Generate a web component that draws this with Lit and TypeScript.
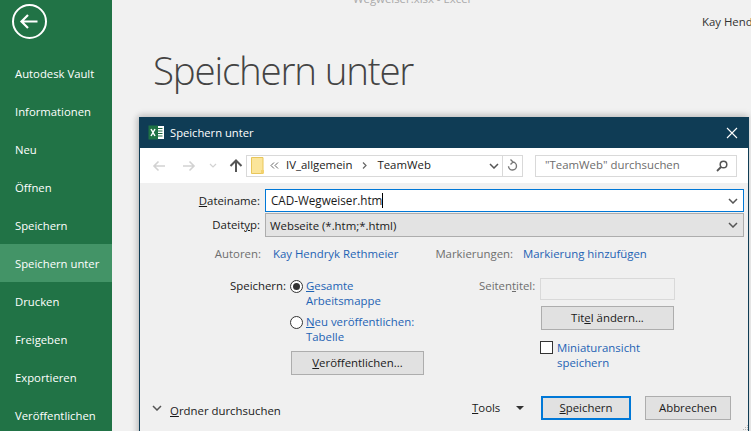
import { LitElement, html, css } from "lit";
import { customElement } from "lit/decorators.js";

const NAV = ["Autodesk Vault","Informationen","Neu","Öffnen","Speichern","Speichern unter","Drucken","Freigeben","Exportieren","Veröffentlichen"];

@customElement("app-root")
export class AppRoot extends LitElement {
  static styles = css`
    :host { display:block; width:751px; height:431px; overflow:hidden; position:relative; background:#f1f1f1;
      font-family:"Open Sans","Noto Sans",sans-serif; font-size:11.4px; color:#1a1a1a; }
    * { box-sizing:border-box; }
    u { text-underline-offset:1px; text-decoration-thickness:1px; }
    .app { display:flex; height:431px; }
    .side { width:112px; flex:none; background:#217346; color:#fff; display:flex; flex-direction:column; }
    .back { height:54px; flex:none; padding:4px 0 0 12px; }
    .nav { height:38px; flex:none; padding-left:15px; display:flex; align-items:center; font-size:11.3px; }
    .nav.on { background:#439467; }
    .main { flex:1; position:relative; padding:42px 0 0 41px; }
    .h1 { font-size:38.5px; font-weight:300; color:#444; line-height:56px; letter-spacing:-1.2px; }
    .wintitle { position:absolute; left:241px; top:-9px; line-height:16px; color:#aaa; }
    .user { position:absolute; right:-30px; top:14px; width:79px; white-space:nowrap; line-height:16px; color:#333; }
    .dlg { position:absolute; left:139px; top:117px; width:610px; height:330px; background:#f0f0f0;
      border:1px solid #0f3c55; border-top:none; box-shadow:-3px 0 6px rgba(0,0,0,.13), 0 -3px 6px rgba(0,0,0,.13); display:flex; flex-direction:column; }
    .tbar { height:31px; flex:none; background:#0f3c55; color:#fff; display:flex; align-items:center; padding:0 10px 0 8px; gap:5px; font-size:11.2px; }
    .tbar span { flex:1; }
    .tool { height:35px; flex:none; background:#fff; display:flex; align-items:center; padding:0 11px 0 12px; }
    .navs { width:94px; flex:none; display:flex; align-items:center; }
    .addr { width:277px; height:22px; border:1px solid #d9d9d9; display:flex; align-items:center; padding-left:4px; flex:none; color:#222; }
    .addr .crumbs { flex:1; display:flex; align-items:center; gap:7px; padding-left:6px; }
    .addr span, .search span, .input span, .btn span, .btn.cancel { padding-bottom:2px; }
    .addr .refresh { width:20px; height:20px; border-left:1px solid #d9d9d9; display:flex; align-items:center; justify-content:center; }
    .addr .dd { width:16px; display:flex; justify-content:center; }
    .search { width:202px; height:22px; margin-left:12px; border:1px solid #d9d9d9; display:flex; align-items:center; justify-content:space-between; padding:0 8px 0 9px; color:#6d6d6d; flex:none; }
    .form { flex:1; position:relative; padding-top:6px; }
    .row { display:flex; align-items:center; }
    .lbl { width:125px; text-align:right; padding-right:5px; flex:none; }
    .input { width:479px; height:23px; border:1px solid #0078d7; background:#fff; display:flex; align-items:center; padding:0 5px; justify-content:space-between; font-size:11.7px; }
    .caret { display:inline-block; width:1px; height:15px; background:#000; vertical-align:-3px; }
    .select { width:479px; height:24px; margin-top:1px; border:1px solid #adadad; background:#e3e3e3; display:flex; align-items:center; padding:0 5px 0 4px; justify-content:space-between; }
    .meta { margin-top:5px; height:22px; }
    .meta .lab { color:#6e6e6e; width:121px; text-align:right; flex:none; margin-right:12px; }
    .link { color:#1e63b4; }
    .meta .m2 { color:#6e6e6e; margin-left:37px; margin-right:10px; }
    .opts { display:flex; margin-top:14px; }
    .left { width:400px; flex:none; padding-left:89px; display:flex; }
    .left .cap { width:61px; text-align:right; padding-right:4px; flex:none; line-height:15px; }
    .radios { display:flex; flex-direction:column; width:140px; }
    .radio { display:flex; gap:3px; color:#1e63b4; line-height:15px; }
    .radio + .radio { margin-top:6px; }
    .rd { width:13px; height:13px; flex:none; margin-top:2px; }
    .btn { height:24px; border:1px solid #adadad; background:#e1e1e1; display:flex; align-items:center; justify-content:center; color:#1a1a1a; flex:none; }
    .pub { width:133px; margin:7px 0 0 1px; }
    .right { display:flex; flex-direction:column; }
    .stitle { display:flex; align-items:flex-start; margin-left:-61px; }
    .stitle label { width:61px; padding-right:6px; text-align:right; color:#6e6e6e; line-height:15px; white-space:nowrap; flex:none; display:block; }
    .stitle .box { width:135px; height:22px; border:1px solid #d9d9d9; background:#f0f0f0; }
    .ttl { width:133px; margin:6px 0 0 1px; }
    .chk { display:flex; gap:4px; margin-top:10px; color:#1e63b4; line-height:15px; }
    .cb { width:13px; height:13px; border:1px solid #333; background:#fff; flex:none; margin-top:1px; }
    .foot { position:absolute; left:0; right:0; top:213px; height:24px; display:flex; align-items:center; }
    .more { margin-left:12px; display:flex; align-items:center; gap:8px; width:320px; flex:none; }
    .more span { padding-top:4px; }
    .tools { width:69px; flex:none; display:flex; align-items:center; gap:16px; }
    .tools span { padding-bottom:2px; }
    .save { width:90px; border:2px solid #0078d7; background:#e1e1e1; }
    .cancel { width:86px; margin-left:14px; }
    .grip { position:absolute; left:603px; top:242px; }
  `;

  private chev() {
    return html`<svg width="10" height="6" viewBox="0 0 10 6"><path d="M1 1l4 4 4-4" fill="none" stroke="#555" stroke-width="1.500"/></svg>`;
  }

  render() {
    return html`
      <div class="app">
        <div class="side">
          <div class="back">
            <svg width="36" height="36" viewBox="0 0 36 36"><circle cx="17.500" cy="17.500" r="16.500" fill="none" stroke="#fff" stroke-width="2"/>
              <path d="M9.500 17.500h16M16 11l-6.500 6.500L16 24" fill="none" stroke="#fff" stroke-width="2.200"/></svg>
          </div>
          ${NAV.map((n) => html`<div class="nav ${n === "Speichern unter" ? "on" : ""}">${n}</div>`)}
        </div>
        <div class="main">
          <div class="wintitle">Wegweiser.xlsx - Excel</div>
          <div class="user">Kay Hendryk Rethmeier</div>
          <div class="h1">Speichern unter</div>
        </div>
      </div>
      <div class="dlg">
        <div class="tbar">
          <svg width="17" height="15" viewBox="0 0 17 15"><rect x="8" y="1" width="8" height="13" fill="#fff"/><path d="M10 3.500h4.500M10 6h4.500M10 8.500h4.500M10 11h4.500" stroke="#1f6b43" stroke-width="1.200"/>
            <rect x="0.500" y="0.500" width="9.500" height="14" fill="#1f7244"/><path d="M3 4l4 7M7 4l-4 7" stroke="#fff" stroke-width="1.500"/></svg>
          <span>Speichern unter</span>
          <svg width="12" height="12" viewBox="0 0 12 12"><path d="M1 1l10 10M11 1L1 11" stroke="#fff" stroke-width="1.100"/></svg>
        </div>
        <div class="tool">
          <div class="navs">
            <svg width="14" height="12" viewBox="0 0 14 12"><path d="M13 6H2M6.500 1.500L2 6l4.500 4.500" fill="none" stroke="#d2d2d2" stroke-width="1.600"/></svg>
            <svg style="margin-left:16px" width="14" height="12" viewBox="0 0 14 12"><path d="M1 6h11M7.500 1.500L12 6l-4.500 4.500" fill="none" stroke="#d2d2d2" stroke-width="1.600"/></svg>
            <svg style="margin-left:13px" width="8" height="5" viewBox="0 0 8 5"><path d="M1 1l3 3 3-3" fill="none" stroke="#d2d2d2" stroke-width="1.200"/></svg>
            <svg style="margin-left:12px" width="14" height="13" viewBox="0 0 14 13"><path d="M7 13V2M1.500 7L7 1.500 12.500 7" fill="none" stroke="#555" stroke-width="2"/></svg>
          </div>
          <div class="addr">
            <svg width="13" height="17" viewBox="0 0 13 17"><path d="M.5.500h11.500v16H.5z" fill="#fbe59a" stroke="#e8c65b"/><path d="M10 13h3v3.500h-3z" fill="#f3d26e"/></svg>
            <div class="crumbs">
              <svg width="9" height="7" viewBox="0 0 9 7"><path d="M4 .500L1 3.500l3 3M8 .500L5 3.500l3 3" fill="none" stroke="#666" stroke-width="1"/></svg>
              <span>IV_allgemein</span>
              <svg style="margin:0 3px" width="5" height="7" viewBox="0 0 5 7"><path d="M1 .500l3 3-3 3" fill="none" stroke="#666" stroke-width="1.200"/></svg>
              <span>TeamWeb</span>
            </div>
            <div class="dd">${this.chev()}</div>
            <div class="refresh"><svg width="11" height="13" viewBox="0 0 11 13"><path d="M5.500 3a4 4 0 1 1-4 4.200M3.500 .500l2.500 2.500-2.500 2.500" fill="none" stroke="#777" stroke-width="1.400"/></svg></div>
          </div>
          <div class="search">
            <span>"TeamWeb" durchsuchen</span>
            <svg width="12" height="12" viewBox="0 0 12 12"><circle cx="7.500" cy="4.500" r="3.300" fill="none" stroke="#555" stroke-width="1.500"/><path d="M5 7l-4 4" stroke="#555" stroke-width="1.800"/></svg>
          </div>
        </div>
        <div class="form">
          <div class="row"><div class="lbl"><u>D</u>ateiname:</div>
            <div class="input"><span>CAD-Wegweiser.htm<i class="caret"></i></span>${this.chev()}</div></div>
          <div class="row"><div class="lbl">Dateit<u>y</u>p:</div>
            <div class="select"><span>Webseite (*.htm;*.html)</span>${this.chev()}</div></div>
          <div class="row meta">
            <div class="lab">Autoren:</div><span class="link">Kay Hendryk Rethmeier</span>
            <span class="m2">Markierungen:</span><span class="link">Markierung hinzufügen</span>
          </div>
          <div class="opts">
            <div class="left">
              <div class="cap">Speichern:</div>
              <div class="radios">
                <div class="radio">
                  <svg class="rd" viewBox="0 0 13 13"><circle cx="6.500" cy="6.500" r="6" fill="#fff" stroke="#333"/><circle cx="6.500" cy="6.500" r="3.500" fill="#333"/></svg>
                  <div><u>G</u>esamte<br>Arbeitsmappe</div>
                </div>
                <div class="radio">
                  <svg class="rd" viewBox="0 0 13 13"><circle cx="6.500" cy="6.500" r="6" fill="#fff" stroke="#333"/></svg>
                  <div style="white-space:nowrap"><u>N</u>eu veröffentlichen:<br>Tabelle</div>
                </div>
                <div class="btn pub"><span><u>V</u>eröffentlichen...</span></div>
              </div>
            </div>
            <div class="right">
              <div class="stitle"><label>Seiten<u>t</u>itel:</label><div class="box"></div></div>
              <div class="btn ttl"><span>Tit<u>e</u>l ändern...</span></div>
              <div class="chk"><div class="cb"></div><div>Miniaturansicht<br>speichern</div></div>
            </div>
          </div>
          <div class="foot">
            <div class="more">${this.chev()}<span><u>O</u>rdner durchsuchen</span></div>
            <div class="tools"><span><u>T</u>ools</span>
              <svg width="8" height="4" viewBox="0 0 8 4"><path d="M0 0h8L4 4z" fill="#333"/></svg></div>
            <div class="btn save"><span><u>S</u>peichern</span></div>
            <div class="btn cancel">Abbrechen</div>
          </div>
          <svg class="grip" width="6" height="6" viewBox="0 0 6 6"><path d="M4 0h1v1H4zM2 2h1v1H2zM4 2h1v1H4zM0 4h1v1H0zM2 4h1v1H2zM4 4h1v1H4z" fill="#b5b5b5"/></svg>
        </div>
      </div>
    `;
  }
}
